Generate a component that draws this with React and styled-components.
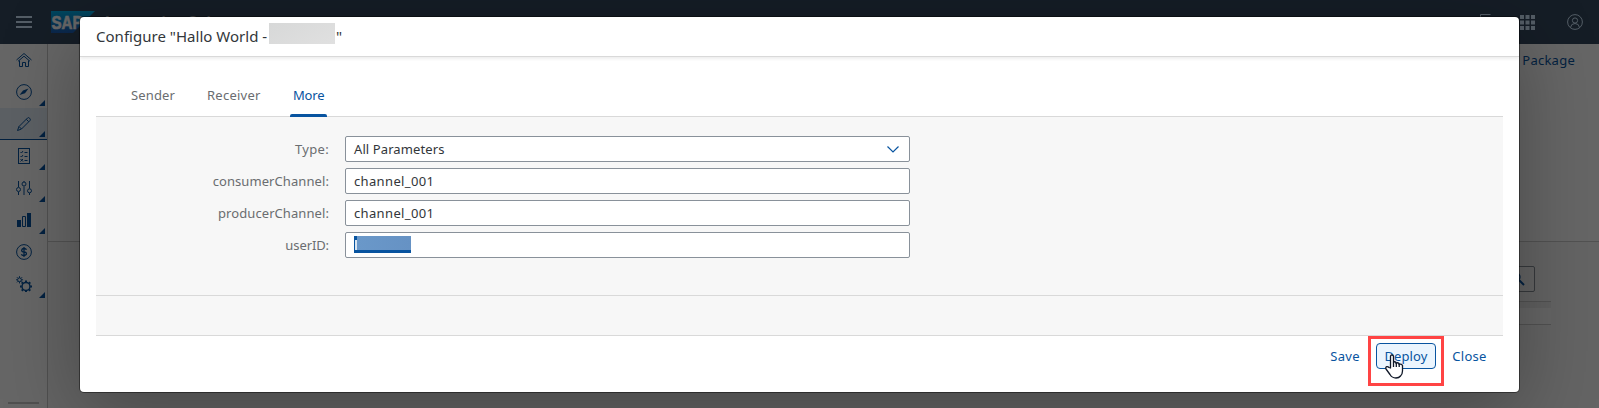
import React from "react";
import styled, { createGlobalStyle } from "styled-components";

const GlobalStyle = createGlobalStyle`
  * { box-sizing: border-box; }
  body { margin: 0; overflow: hidden; font-family: "Noto Sans", "Open Sans", sans-serif; font-size: 13px; color: #32363a; }
`;

const Shell = styled.div`
  position: relative;
  height: 408px;
  display: flex;
  flex-direction: column;
  background: #fff;
`;
const ShellBar = styled.header`
  height: 44px;
  flex: none;
  display: flex;
  align-items: center;
  padding: 0 16px;
  background: #354a5f;
  color: #d1e8ff;
`;
const ProductTitle = styled.span`
  margin-left: 10px;
  font-family: Roboto, sans-serif;
  font-size: 16px;
  font-weight: 700;
  color: #fff;
`;
const Spacer = styled.div`
  flex: 1;
`;
const BarIcon = styled.svg`
  display: block;
  flex: none;
  margin-left: ${(p) => p.$gap || 0}px;
`;
const Body = styled.div`
  flex: 1;
  display: flex;
  min-height: 0;
`;
const SideNav = styled.nav`
  width: 48px;
  display: flex;
  flex-direction: column;
  border-right: 1px solid #c8c8c8;
`;
const NavItem = styled.div`
  position: relative;
  height: 32px;
  flex: none;
  display: flex;
  align-items: center;
  justify-content: center;
  color: #0854a0;
  background: ${(p) => (p.$active ? "#e5f0fa" : "transparent")};
  border-bottom: ${(p) => (p.$active ? "1px solid #0854a0" : "0")};
  svg { display: block; }
`;
const Corner = styled.i`
  position: absolute;
  right: 2px;
  bottom: 2px;
  border-left: 6px solid transparent;
  border-bottom: 6px solid #0854a0;
`;
const NavRule = styled.div`
  height: 2px;
  margin: auto 8px 4px;
  background: #c8c8c8;
`;
const Page = styled.main`
  flex: 1;
  display: flex;
  flex-direction: column;
`;
const PageHeader = styled.div`
  height: 198px;
  padding: 8px 24px;
  display: flex;
  justify-content: flex-end;
  border-bottom: 1px solid #ccc;
  color: #0854a0;
  line-height: 17px;
  letter-spacing: 0.25px;
`;
const PageContent = styled.div`
  flex: 1;
  padding: 24px 48px 0;
  background: #fafafa;
`;
const SearchBox = styled.div`
  width: 220px;
  height: 26px;
  margin: 0 16px 9px auto;
  display: flex;
  align-items: center;
  justify-content: flex-end;
  padding-right: 9px;
  border: 1px solid #89919a;
  border-radius: 2px;
  color: #0854a0;
`;
const TableHead = styled.div`
  height: 24px;
  border-top: 1px solid #ccc;
  border-bottom: 1px solid #ccc;
  background: linear-gradient(#efefef 6px, #fff 6px);
`;
const Overlay = styled.div`
  position: absolute;
  inset: 0;
  padding: 17px 80px 16px;
  background: rgba(0, 0, 0, 0.6);
  display: flex;
`;
const Dialog = styled.section`
  flex: 1;
  display: flex;
  flex-direction: column;
  background: #fff;
  border-radius: 4px;
  box-shadow: 0 0 0 1px rgba(0, 0, 0, 0.42), 0 20px 80px rgba(0, 0, 0, 0.3);
`;
const DialogHeader = styled.div`
  height: 40px;
  display: flex;
  align-items: center;
  padding: 0 16px 2px;
  border-bottom: 1px solid #d9d9d9;
  box-shadow: 0 2px 3px rgba(0, 0, 0, 0.07);
  font-size: 15px;
  white-space: pre;
`;
const DialogTitle = styled.span`
  width: 171px;
  letter-spacing: 0.02px;
`;
const Redacted = styled.span`
  width: 66px;
  height: 21px;
  margin: -4px 1px 0 2px;
  background: linear-gradient(150deg, #d7d8d8, #e0e0e0);
`;
const DialogBody = styled.div`
  padding: 22px 16px 0;
`;
const Tabs = styled.div`
  height: 38px;
  display: flex;
  gap: 32px;
  padding-left: 35px;
  border-bottom: 1px solid #d9d9d9;
`;
const Tab = styled.div`
  position: relative;
  width: ${(p) => p.$w}px;
  line-height: 33px;
  letter-spacing: ${(p) => p.$ls}px;
  color: ${(p) => (p.$active ? "#0854a0" : "#6a6d70")};
  &::after {
    content: "";
    display: ${(p) => (p.$active ? "block" : "none")};
    position: absolute;
    left: -3px;
    right: -3px;
    bottom: -1px;
    height: 3px;
    border-radius: 2px 2px 0 0;
    background: #0854a0;
  }
`;
const Form = styled.div`
  height: 179px;
  padding-top: 19px;
  display: flex;
  flex-direction: column;
  gap: 6px;
  background: #f7f7f7;
  border-bottom: 1px solid #d9d9d9;
`;
const Field = styled.div`
  display: grid;
  grid-template-columns: 233px 565px;
  column-gap: 16px;
  align-items: center;
`;
const Label = styled.label`
  text-align: right;
  color: #6a6d70;
  letter-spacing: ${(p) => p.$ls}px;
`;
const Input = styled.div`
  height: 26px;
  display: flex;
  align-items: center;
  justify-content: space-between;
  padding: 0 10px 0 8px;
  border: 1px solid #89919a;
  border-radius: 2px;
  background: #fff;
  letter-spacing: ${(p) => p.$ls || 0}px;
`;
const Selection = styled.span`
  width: 57px;
  height: 17px;
  margin-top: -2px;
  border-left: 1px solid #0854a0;
  border-bottom: 3px solid #0854a0;
  background: linear-gradient(#0854a0, #0854a0) 0 0 / 2px 4px no-repeat,
    linear-gradient(90deg, #d8e4f0 2px, #6a98c9 2px, #6692c4);
`;
const Strip = styled.div`
  height: 40px;
  background: #f7f7f7;
  border-bottom: 1px solid #d9d9d9;
`;
const Footer = styled.footer`
  display: flex;
  align-items: flex-start;
  justify-content: flex-end;
  padding: 0 24px;
`;
const Button = styled.button`
  width: ${(p) => p.$w}px;
  height: 26px;
  margin-top: 7px;
  padding: 0;
  font: inherit;
  letter-spacing: ${(p) => p.$ls}px;
  color: #0854a0;
  background: ${(p) => (p.$hover ? "#ebf5fe" : "transparent")};
  border: 1px solid ${(p) => (p.$hover ? "#0854a0" : "transparent")};
  border-radius: 4px;
`;
const Highlight = styled.div`
  position: relative;
  width: 76px;
  height: 50px;
  display: flex;
  justify-content: center;
  border: 3px solid #ff4444;
  ${Button} { margin-top: 4px; }
`;
const Cursor = styled.svg`
  position: absolute;
  left: 14px;
  top: 15px;
`;

const Ico = ({ children }) => (
  <svg width="16" height="16" viewBox="0 0 16 16" fill="none" stroke="currentColor" strokeWidth="1">
    {children}
  </svg>
);

const gearPath = (cx, cy, r, n) =>
  Array.from({ length: n }, (_, i) => {
    const a = (i / n) * Math.PI * 2;
    return `M${cx + Math.cos(a) * r} ${cy + Math.sin(a) * r}L${cx + Math.cos(a) * (r + 1.7)} ${cy + Math.sin(a) * (r + 1.7)}`;
  }).join("");

const navItems = [
  { key: "home", icon: <><path d="M.5 8 8 1.500 15.500 8" /><path d="M2 9.300 8 4.200 14 9.300M3.500 8.500V14.500H6.500V10.500H9.500V14.500H12.500V8.500" /></> },
  { key: "discover", menu: true, icon: <><circle cx="8" cy="8" r="7.400" /><path d="M3.500 11 7 6.500 12.500 4.500 9 9.200Z" fill="currentColor" stroke="none" /></> },
  { key: "design", menu: true, active: true, icon: <path d="M1.500 14.500 3 10.500 11.500 2Q12.500 1 13.600 2.200 14.900 3.400 14 4.500L5.500 13ZM10.300 3.300 12.700 5.700M3 10.500 5.500 13" /> },
  { key: "test", menu: true, icon: <><rect x="2.500" y=".5" width="11" height="15" /><path d="m4.500 4 1 1 1.500-2M8.500 4.500h3m-7 3.500 1 1L7 7m1.500 1.500h3m-7 2.500 2.500 2.500m0-2.500-2.500 2.500m4-1h3" /></> },
  { key: "configure", menu: true, icon: <><path d="M2.500 1v6M2.500 12v3M8 1v1M8 6.500v8.500M13.500 1v7.500M13.500 13v2" /><circle cx="2.500" cy="9.500" r="2" /><circle cx="8" cy="4" r="2" /><circle cx="13.500" cy="10.800" r="2" /></> },
  { key: "monitor", menu: true, icon: <><path d="M1 8h4v7H1zM11 1h4v14h-4z" fill="currentColor" stroke="none" /><path d="M6.500 4.500h3v10h-3z" /></> },
  { key: "billing", icon: <><circle cx="8" cy="8" r="7.400" /><path d="M10.500 5.700Q10 4.500 8 4.500T5.700 6.200 8 8t2.400 1.800T8 11.500 5.400 10.200M8 3v10" strokeWidth="1.300" /></> },
  { key: "settings", menu: true, icon: <><circle cx="10" cy="10.500" r="4" strokeWidth="1.500" /><path d={gearPath(10, 10.5, 4.3, 8)} strokeWidth="2" /><circle cx="3.500" cy="3.800" r="1.900" /><path d={gearPath(3.5, 3.8, 1.9, 8)} strokeWidth="1" /></> },
];

const fields = [
  { label: "Type:", ls: 0.3, value: "All Parameters", vls: 0.1, select: true },
  { label: "consumerChannel:", ls: 0.08, value: "channel_001", vls: 0.35 },
  { label: "producerChannel:", ls: 0.08, value: "channel_001", vls: 0.35 },
  { label: "userID:", ls: -0.1, selection: true },
];

export default function App() {
  return (
    <Shell>
      <GlobalStyle />
      <ShellBar>
        <BarIcon width="16" height="12" viewBox="0 0 16 12" fill="#d1e8ff">
          <path d="M0 0h16v2H0zM0 5h16v2H0zM0 10h16v2H0z" />
        </BarIcon>
        <BarIcon $gap={19} width="44" height="22" viewBox="0 0 44 22">
          <defs>
            <linearGradient id="logo" x2="0" y2="1">
              <stop stopColor="#00b1eb" />
              <stop offset="1" stopColor="#1e5fbb" />
            </linearGradient>
          </defs>
          <path d="M0 0h44L22 22H0z" fill="url(#logo)" />
          <text x="0.500" y="17.500" fill="#fff" stroke="#fff" strokeWidth=".6" fontFamily="Liberation Sans" fontWeight="700" fontSize="18" textLength="31" lengthAdjust="spacingAndGlyphs">SAP</text>
        </BarIcon>
        <ProductTitle>Integration Suite</ProductTitle>
        <Spacer />
        <BarIcon width="12" height="16" viewBox="0 0 12 16" fill="none" stroke="#d1e8ff">
          <path d="M.5 15.500V.5h10" />
        </BarIcon>
        <BarIcon $gap={28} width="15" height="15" viewBox="0 0 15 15" fill="#d1e8ff">
          <path d="M0 0h4v4H0zM5.500 0h4v4h-4zM11 0h4v4h-4zM0 5.500h4v4H0zM5.500 5.500h4v4h-4zM11 5.500h4v4h-4zM0 11h4v4H0zM5.500 11h4v4h-4zM11 11h4v4h-4z" />
        </BarIcon>
        <BarIcon $gap={32} width="16" height="16" viewBox="0 0 16 16" fill="none" stroke="#d1e8ff">
          <circle cx="8" cy="8" r="7.400" />
          <circle cx="8" cy="6.500" r="2.600" />
          <path d="M3.500 13.500Q4 9.500 8 9.500T12.500 13.500" />
        </BarIcon>
      </ShellBar>
      <Body>
        <SideNav>
          {navItems.map((n) => (
            <NavItem key={n.key} $active={n.active}>
              <Ico>{n.icon}</Ico>
              {n.menu && <Corner />}
            </NavItem>
          ))}
          <NavRule />
        </SideNav>
        <Page>
          <PageHeader>Package</PageHeader>
          <PageContent>
            <SearchBox>
              <svg width="14" height="14" viewBox="0 0 14 14" fill="none" stroke="currentColor">
                <circle cx="5" cy="5" r="4" strokeWidth="1.300" />
                <path d="m8 8 5 5" strokeWidth="2" />
              </svg>
            </SearchBox>
            <TableHead />
          </PageContent>
        </Page>
      </Body>
      <Overlay>
        <Dialog>
          <DialogHeader>
            <DialogTitle>{'Configure "Hallo World -'}</DialogTitle>
            <Redacted />
            {'"'}
          </DialogHeader>
          <DialogBody>
            <Tabs>
              <Tab $w={44} $ls={0.15}>Sender</Tab>
              <Tab $w={54} $ls={0.25}>Receiver</Tab>
              <Tab $w={31} $ls={-0.2} $active>More</Tab>
            </Tabs>
            <Form>
              {fields.map((f) => (
                <Field key={f.label}>
                  <Label $ls={f.ls}>{f.label}</Label>
                  <Input $ls={f.vls}>
                    {f.value}
                    {f.selection && <Selection />}
                    {f.select && (
                      <svg width="12" height="7" viewBox="0 0 12 7" fill="none" stroke="#0854a0" strokeWidth="1.200">
                        <path d="m.5.5 5.500 5.500L11.500.5" />
                      </svg>
                    )}
                  </Input>
                </Field>
              ))}
            </Form>
            <Strip />
          </DialogBody>
          <Footer>
            <Button $w={46} $ls={0.3}>Save</Button>
            <Highlight>
              <Button $w={60} $ls={0.1} $hover>Deploy</Button>
              <Cursor width="19" height="25" viewBox="0 0 19 25" fill="#fff" stroke="#101828" strokeWidth="1.300" strokeLinejoin="round">
                <path d="M5.500 14V2.500Q5.500 1 7 1t1.500 1.500V8.500Q9.500 7 11 8.500V9.300Q12.500 8 14 9.500v.8q2-.8 3.500 1V17q0 3-2 5-1.500 2-4.500 2-4 0-6-3.500L1 15q-.7-1.700.7-2.300 1.300-.3 2.300.8Z" />
                <path d="M8.500 8.500V13M11.300 9V13M14.200 10V13" />
              </Cursor>
            </Highlight>
            <Button $w={51} $ls={0.3}>Close</Button>
          </Footer>
        </Dialog>
      </Overlay>
    </Shell>
  );
}
